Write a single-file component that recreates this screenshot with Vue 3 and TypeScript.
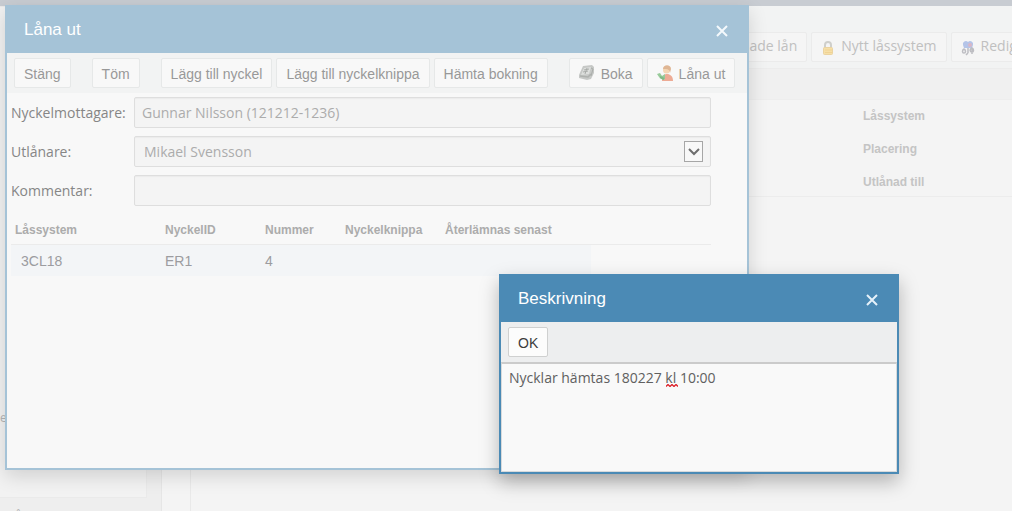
<script setup lang="ts">
import { ref } from 'vue'

interface Column {
  title: string
  width: string
}

const columns: Column[] = [
  { title: 'Låssystem', width: 'c150' },
  { title: 'NyckelID', width: 'c100' },
  { title: 'Nummer', width: 'c80' },
  { title: 'Nyckelknippa', width: 'c100' },
  { title: 'Återlämnas senast', width: 'c146' },
]
const rows: string[][] = [['3CL18', 'ER1', '4', '', '']]
const details: string[] = ['Låssystem', 'Placering', 'Utlånad till']

const receiver = ref('Gunnar Nilsson (121212-1236)')
const lender = ref('Mikael Svensson')
const comment = ref('')
const description = ref('Nycklar hämtas 180227 kl 10:00')
</script>

<template>
  <div class="page">
    <div class="strip"></div>
    <div class="workspace">
      <aside class="sidebar">
        <div class="side-panel">e</div>
        <div class="side-foot">Å</div>
      </aside>
      <main class="main">
        <div class="main-tools">
          <button type="button" class="faded">Försenade lån</button>
          <button type="button" class="faded">
            <svg width="16" height="16" viewBox="0 0 16 16">
              <path d="M4 8V5a3 3 0 0 1 6 0V8" fill="none" stroke="#cfcfcb" stroke-width="2" />
              <rect x="2.500" y="7.500" width="9" height="7" rx="1" fill="#f6dfa8" stroke="#ebd3a0" />
              <path d="M4 10h7M4 12.500h7" stroke="#f0d394" />
            </svg>
            Nytt låssystem
          </button>
          <button type="button" class="faded">
            <svg width="16" height="16" viewBox="0 0 16 16">
              <path d="M2 5a3 3 0 0 1 5-3a3 3 0 0 1 5 3l-1 3H3z" fill="#b4c4e8" />
              <circle cx="9" cy="5" r="2" fill="#d9b6c6" />
              <path d="M3 9c-2 1-2 4 0 4s2-3 0-4zm4-1v5M7 13l-2 2M11 8c-3 1-2 4 0 4s2-3 0-4v6" fill="none" stroke="#bdbdc2" stroke-width="1.500" />
            </svg>
            Redigera
          </button>
        </div>
        <div class="main-head"></div>
        <ul class="details">
          <li v-for="d in details" :key="d">{{ d }}</li>
        </ul>
      </main>
    </div>

    <section class="window loan" aria-label="Låna ut">
      <header class="title">
        <span>Låna ut</span>
        <button type="button" class="close" aria-label="Stäng fönster">
          <svg width="12" height="12" viewBox="0 0 12 12"><path d="M1 1l10 10M11 1L1 11" stroke="#f4f9fc" stroke-width="2" /></svg>
        </button>
      </header>
      <div class="tools">
        <div class="group"><button type="button" class="btn">Stäng</button></div>
        <div class="group"><button type="button" class="btn">Töm</button></div>
        <div class="group">
          <button type="button" class="btn">Lägg till nyckel</button>
          <button type="button" class="btn">Lägg till nyckelknippa</button>
          <button type="button" class="btn">Hämta bokning</button>
        </div>
        <div class="group">
          <button type="button" class="btn">
            <svg width="16" height="16" viewBox="0 0 16 16">
              <path d="M4 1l9-1 2 2 0 6-3 6-4 1-8-2v-3z" fill="#c6c8c6" />
              <path d="M5 3l7-1-2 7-8 1z" fill="#dddfdd" />
              <path d="M5 5l5-1M4 7l5-1M8 3L6 9M12 3l2 1-2 7" fill="none" stroke="#a9aca9" />
              <path d="M1 11l8 1 3-3" fill="none" stroke="#aeb1ae" stroke-width="1.500" />
            </svg>
            Boka
          </button>
          <button type="button" class="btn">
            <svg width="16" height="16" viewBox="0 0 16 16">
              <path d="M5 16c0-5 2-7 5-7s6 2 6 7z" fill="#edab95" />
              <circle cx="9.500" cy="5" r="3.500" fill="#f4d6b4" />
              <path d="M6 4c0-5 8-5 8 0l-1 4c0-3-2-4-4-4z" fill="#dfb694" />
              <path d="M0 9l3-1 2 3 3-2 0 5-2 1-4-3z" fill="#98cb9a" />
              <path d="M3 12l4 2" stroke="#80b886" stroke-width="2" />
            </svg>
            Låna ut
          </button>
        </div>
      </div>
      <div class="body">
        <form class="form" @submit.prevent>
          <label for="receiver">Nyckelmottagare:</label>
          <input id="receiver" v-model="receiver" type="text" class="field" />
          <label for="lender">Utlånare:</label>
          <div class="select-wrap">
            <select id="lender" v-model="lender" class="field">
              <option>Mikael Svensson</option>
            </select>
            <span class="arrow">
              <svg width="12" height="8" viewBox="0 0 12 8"><path d="M1 1l5 5 5-5" fill="none" stroke="#6e6e6e" stroke-width="2" /></svg>
            </span>
          </div>
          <label for="comment">Kommentar:</label>
          <input id="comment" v-model="comment" type="text" class="field" />
        </form>
        <table class="keys">
          <thead>
            <tr>
              <th v-for="c in columns" :key="c.title" :class="c.width" scope="col">{{ c.title }}</th>
              <td></td>
            </tr>
          </thead>
          <tbody>
            <tr v-for="(r, i) in rows" :key="i">
              <td v-for="(cell, j) in r" :key="j" class="cell">{{ cell }}</td>
              <td></td>
            </tr>
          </tbody>
        </table>
      </div>
    </section>

    <section class="window note" aria-label="Beskrivning">
      <header class="title">
        <span>Beskrivning</span>
        <button type="button" class="close" aria-label="Stäng beskrivning">
          <svg width="12" height="12" viewBox="0 0 12 12"><path d="M1 1l10 10M11 1L1 11" stroke="#e6f2fa" stroke-width="2" /></svg>
        </button>
      </header>
      <div class="tools"><button type="button" class="btn">OK</button></div>
      <div class="note-body">
        <textarea v-model="description" aria-label="Beskrivning" spellcheck="false"></textarea>
        <svg class="squiggle" width="12" height="3" viewBox="0 0 12 3">
          <path d="M0 2.500l2-2 2 2 2-2 2 2 2-2 2 2" fill="none" stroke="#dc1f28" stroke-width="1.300" />
        </svg>
      </div>
    </section>
  </div>
</template>

<style>
body {
  background: #f4f4f4;
}
</style>

<style scoped>
.page {
  position: relative;
  display: flex;
  flex-direction: column;
  min-height: 100vh;
  overflow: hidden;
  background: #f4f4f4;
  font: 14px/20px "Liberation Sans", Arial, sans-serif;
}
.page *,
.page {
  box-sizing: border-box;
}
button {
  font: inherit;
  cursor: pointer;
}
.strip {
  height: 6px;
  background: #c8ccd2;
}
.workspace {
  flex: 1;
  display: flex;
  gap: 28px;
}
.sidebar {
  width: 162px;
  display: flex;
  flex-direction: column;
  background: #eeeeee;
  border-right: 1px solid #e6e6e6;
}
.side-panel {
  flex: 1;
  margin-right: 14px;
  padding-top: 401px;
  color: #b4b4b4;
  font: 12px/20px "Open Sans", sans-serif;
  background: #f2f2f2;
  border: 1px solid #eaeaea;
  border-left: 0;
}
.side-foot {
  height: 13px;
  padding: 9px 0 0 14px;
  overflow: hidden;
  color: #b4b4b4;
  font: bold 12px/20px "Liberation Sans", Arial, sans-serif;
}
.main {
  flex: 1;
  min-width: 0;
  border-left: 1px solid #e9e9e9;
}
.main-tools {
  display: flex;
  gap: 4px;
  height: 63px;
  padding: 26px 0 0 504px;
  background: #f2f3f3;
  border-bottom: 1px solid #ececec;
  overflow: hidden;
}
.faded {
  display: flex;
  flex: none;
  align-items: center;
  gap: 4px;
  height: 30px;
  padding: 0 9px 2px;
  color: #c0c0c0;
  font-family: "Open Sans", sans-serif;
  background: #f5f5f5;
  border: 1px solid #ebebeb;
  border-radius: 2px;
}
.faded svg {
  margin-top: 4px;
}
.main-head {
  height: 31px;
  background: #f0f0f0;
  border-bottom: 1px solid #ededed;
}
.details {
  margin: 0;
  padding: 0 0 0 672px;
  height: 97px;
  list-style: none;
  color: #c4c4c4;
  font: bold 12px/33px "Liberation Sans", Arial, sans-serif;
  border-bottom: 1px solid #ececec;
}
.window {
  position: absolute;
  display: flex;
  flex-direction: column;
  border: 2px solid;
}
.loan {
  top: 5px;
  left: 5px;
  right: 263px;
  min-height: 465px;
  background: #f8f8f8;
  border-color: #a5c3d7;
  box-shadow: 0 6px 18px rgba(0, 0, 0, 0.14);
}
.note {
  top: 274px;
  right: 113px;
  width: 400px;
  background: #f8f8f8;
  border-color: #4b8ab5;
  box-shadow: 0 8px 18px rgba(0, 0, 0, 0.27);
}
.title {
  display: flex;
  align-items: center;
  justify-content: space-between;
  height: 46px;
  padding: 0 19px 0 17px;
  color: #fff;
  font-size: 17px;
}
.loan .title {
  background: #a5c3d7;
}
.note .title {
  background: #4b8ab5;
}
.close {
  display: flex;
  margin-top: 2px;
  padding: 0;
  background: none;
  border: 0;
}
.tools {
  display: flex;
  gap: 21px;
  height: 40px;
  padding: 5px 7px;
  background: #f2f3f3;
}
.note .tools {
  background: #edeeef;
}
.group {
  display: flex;
  gap: 4px;
}
.btn {
  display: flex;
  align-items: center;
  gap: 6px;
  height: 30px;
  padding: 2px 9px 0;
  color: #989898;
  white-space: nowrap;
  background: #f8f8f8;
  border: 1px solid #e6e8e8;
  border-radius: 2px;
}
.btn svg {
  margin-top: -3px;
}
.note .btn {
  color: #3c3c3c;
  background: #fcfcfc;
  border-color: #cfd0d0;
}
.body {
  padding: 4px 36px 0 4px;
}
.form {
  display: grid;
  grid-template-columns: 123px 1fr;
  row-gap: 8px;
  align-items: center;
  color: #868686;
  font-family: "Open Sans", sans-serif;
}
.field {
  display: block;
  width: 100%;
  height: 31px;
  margin: 0;
  padding: 0 7px;
  color: #acacac;
  font: 14px/20px "Open Sans", sans-serif;
  background: #f4f4f4;
  border: 1px solid #dedede;
  border-radius: 2px;
  outline: 0;
  box-shadow: inset 0 1px 1px #ebebeb;
}
select.field {
  padding: 0 9px;
  appearance: none;
}
.select-wrap {
  position: relative;
}
.arrow {
  position: absolute;
  top: 5px;
  right: 8px;
  display: grid;
  place-items: center;
  width: 19px;
  height: 21px;
  background: #f8f8f8;
  border: 1px solid #a6a6a6;
  pointer-events: none;
}
.keys {
  width: 100%;
  table-layout: fixed;
  border-collapse: collapse;
}
.keys th,
.keys td {
  padding: 0 0 0 4px;
  text-align: left;
}
.keys thead tr {
  height: 38px;
  border-bottom: 1px solid #ebebeb;
}
.keys th {
  padding-top: 11px;
  color: #acacac;
  font-size: 12px;
}
.keys tbody tr {
  height: 32px;
  color: #9c9ca0;
}
.keys td.cell {
  padding-top: 2px;
  background: #f3f5f7;
}
.keys td.cell:first-child {
  padding-left: 10px;
}
.c150 {
  width: 150px;
}
.c100 {
  width: 100px;
}
.c80 {
  width: 80px;
}
.c146 {
  width: 150px;
}
.note-body {
  position: relative;
}
textarea {
  display: block;
  width: 100%;
  height: 110px;
  margin: 0;
  padding: 4px 7px;
  color: #606060;
  font: 14px/20px "Open Sans", sans-serif;
  background: #f9f9f9;
  border: 1px solid #d8dadb;
  border-top: 2px solid #cbcbcb;
  outline: 0;
  resize: none;
}
.squiggle {
  position: absolute;
  top: 22px;
  left: 165px;
}
</style>
